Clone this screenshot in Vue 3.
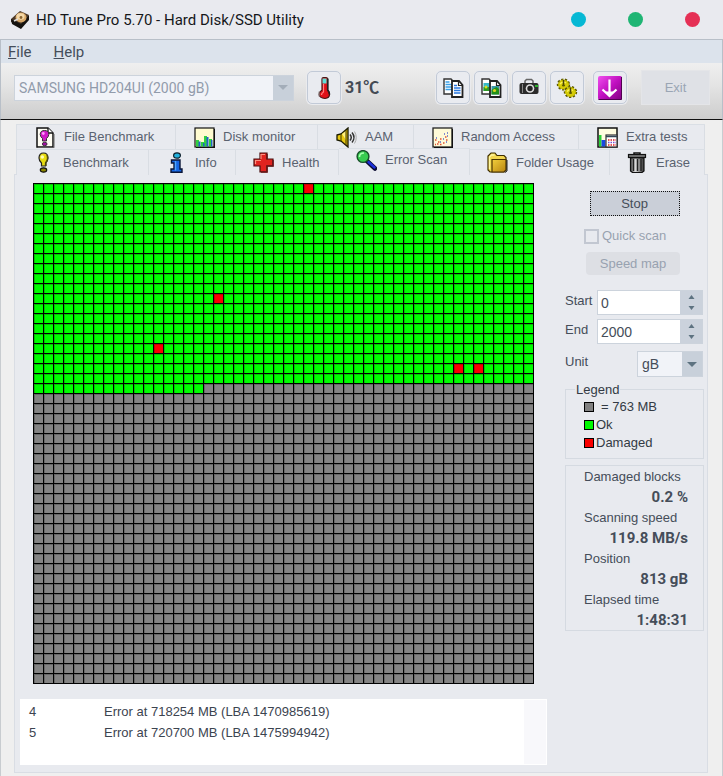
<script setup>
import { ref } from 'vue'

const drive = ref('SAMSUNG HD204UI (2000 gB)')
const start = ref('0')
const end = ref('2000')
const unit = ref('gB')
const quickScan = ref(false)
const active = ref('Error Scan')

const icons = {
  copyText:
    '<path d="M3 3h7l3 3v12H3z" fill="#fff" stroke="#333" stroke-width="1.400"/><path d="M4.500 6h4M4.500 8.500h7M4.500 11h7M4.500 13.500h7" stroke="#3aa0e8" stroke-width="1.300"/><path d="M11 5h7l3.500 4v12H11z" fill="#fff" stroke="#222" stroke-width="1.800"/><path d="M17.500 5v4.500h4" fill="none" stroke="#222" stroke-width="1.200"/><path d="M13 9.500h3M13 12h6.500M13 14.500h6.500M13 17h6.500" stroke="#2878e0" stroke-width="1.500"/>',
  copyImage:
    '<path d="M3 3h7l3 3v12H3z" fill="#fff" stroke="#333" stroke-width="1.400"/><rect x="4.500" y="7" width="6" height="8" fill="#38b8c8"/><path d="M4.500 11h6v4h-6z" fill="#2c9a22"/><circle cx="7" cy="11" r="1.500" fill="#d8e020"/><path d="M11 5h7l3.500 4v12H11z" fill="#fff" stroke="#222" stroke-width="1.800"/><path d="M17.500 5v4.500h4" fill="none" stroke="#222" stroke-width="1.200"/><rect x="12.500" y="10" width="7.500" height="8.500" fill="#3898a8"/><path d="M12.500 14l3-2 2-1 2.500 2v5.500h-7.500z" fill="#239018"/><circle cx="15.500" cy="14.500" r="1.600" fill="#d8d820"/>',
  camera:
    '<path d="M8 7V5l1.500-1.500h5L16 5v2" fill="none" stroke="#666" stroke-width="1.500"/><path d="M4.500 7h15q2 0 2 2v7q0 2-2 2h-15q-2 0-2-2V9q0-2 2-2z" fill="#2b2b2b"/><path d="M5.500 8v9" stroke="#888"/><circle cx="13" cy="12.500" r="4.300" fill="#ddd"/><circle cx="13" cy="12.500" r="2.700" fill="#222"/><rect x="18" y="9" width="3" height="2" fill="#2db52d"/>',
  gears:
    '<g fill="#d6cc08"><ellipse cx="8.500" cy="8.500" rx="5.200" ry="4.600" stroke="#5c5800" stroke-width="3" stroke-dasharray="2 1.400"/><ellipse cx="8.500" cy="8.500" rx="5" ry="4.400" stroke="#c8be00" stroke-width="1"/><ellipse cx="15.500" cy="16" rx="5.200" ry="4.600" stroke="#5c5800" stroke-width="3" stroke-dasharray="2 1.400"/><ellipse cx="15.500" cy="16" rx="5" ry="4.400" stroke="#c8be00" stroke-width="1"/></g><path d="M5 8q2.500-3 6-1M12 15.500q2.500-3 6-1" fill="none" stroke="#fff45c" stroke-width="1.300"/><path d="M8.500 4v5.500M15.500 11.500V17" stroke="#45430c" stroke-width="1.500"/><ellipse cx="8.500" cy="9.500" rx="1.600" ry="1.100" fill="#5c5800"/><ellipse cx="15.500" cy="17" rx="1.600" ry="1.100" fill="#5c5800"/>',
  down:
    '<rect x="0" y="0" width="24" height="24" rx="2" fill="url(#purple)"/><path d="M.5 23.500h23V1" fill="none" stroke="#500050"/><path d="M11.500 3.500v15M4.500 13.500l7 6.500 7-6.500" fill="none" stroke="#fff" stroke-width="2.200"/><path d="M7 15.500h9l-4.500 4.800z" fill="#fff"/>',
  thermo:
    '<path d="M10 3q0-1.500 1.500-1.500H14q1.500 0 1.500 1.500v11q2 2 2 4.500 0 3.500-4.500 4-5.500-.5-6-4 0-2.500 3-4.500z" fill="#e01018" stroke="#4a1414" stroke-width="1.200"/><path d="M10.500 2.500h4v5h-4z" fill="#5ce0d8"/><path d="M15.800 2.500V14q1.700 2 1.700 4.500" fill="none" stroke="#222" stroke-width="1.600"/><path d="M11.500 8v8q-2 1-2 3" fill="none" stroke="#ff8484" stroke-width="1.200"/><path d="M7 15.500v5" stroke="#9a9a9a" stroke-width="1"/>',
  fileBench:
    '<path d="M2 1h11l5 5v14H2z" fill="#fffdf4" stroke="#111" stroke-width="1.500"/><path d="M13 1v5h5" fill="#fff" stroke="#111" stroke-width="1.300"/><path d="M19 7v13.800H3" fill="none" stroke="#666"/><path d="M9.500 3.500q4.300 0 4.300 4 0 2-2.300 4V14h-4v-2.500q-2.300-2-2.300-4 0-4 4.300-4z" fill="#d018c8" stroke="#333"/><circle cx="8.300" cy="6.500" r="1.400" fill="#ff9cfa"/><ellipse cx="9.700" cy="17" rx="2.400" ry="1.700" fill="#a010a0" stroke="#222" stroke-width=".8"/>',
  monitor:
    '<rect x="1" y="1" width="19" height="19" fill="#fffbd0" stroke="#111" stroke-width="1.200"/><path d="M20.500 2v18.500H2" fill="none" stroke="#111" stroke-width="1.200"/><path d="M2 13h3v6.500H2zM7 15h3v4.500H7zM10 9h3v10.500h-3zM15 12h3v7.500h-3z" fill="#30d040"/><path d="M4.500 14.500h2v5h-2zM9 16h1.500v3.500H9zM12.500 10h2v9.500h-2zM17 13h1.500v6.500H17z" fill="#1f62c8"/>',
  speaker:
    '<path d="M1 8l4-1 7-6v19l-7-6-4-1z" fill="#e8c810" stroke="#191900" stroke-width="1.300"/><path d="M6 7l4-3v9z" fill="#fff080"/><path d="M10 3v15M5 7v7" stroke="#3b3200"/><path d="M14 7.500q2.500 3 0 6M16 5.500q4 5 0 10" fill="none" stroke="#333" stroke-width="1.500"/><path d="M18.500 4.500q3.500 6 0 12" fill="none" stroke="#aaa"/>',
  random:
    '<rect x="1" y="1" width="19" height="19" fill="#fffbd8" stroke="#222" stroke-width="1.300"/><path d="M20.500 2v18.500H2" fill="none" stroke="#111" stroke-width="1.200"/><path d="M3 13h1.500M6 15h1.500M8 12h1.500M5 17h1.500M11 16h1.500M14 13h1.500M3 17.500h1M8 17.500h1.500M13 10h1.500" stroke="#e05030" stroke-width="1.500"/><path d="M4 11h1M12 7h1M15 6h1M15 9h1M11 12h1M8 15h1M14 15h1" stroke="#5868c8" stroke-width="1.300"/>',
  extra:
    '<rect x="1" y="1" width="19" height="19" fill="#fffde0" stroke="#111" stroke-width="1.500"/><path d="M2 8h2.500v11.500H2z" fill="#28d038"/><path d="M4.500 13h4v6.500h-4z" fill="#1848e0"/><rect x="9" y="8" width="11" height="12" fill="#fff" stroke="#333" stroke-width="1.200"/><path d="M9 9.500h11" stroke="#345" stroke-width="1.500"/><path d="M11 13h8M11 18h8" stroke="#e02020" stroke-width="1.500" stroke-dasharray="1.500 1"/><path d="M11 15.500h8" stroke="#7850d0" stroke-width="1.500" stroke-dasharray="1.500 1"/>',
  bulb:
    '<path d="M9.500 1q4.500 0 4.500 5 0 3-2.500 5v3h-4v-3Q5 9 5 6q0-5 4.500-5z" fill="#e8dc10" stroke="#222" stroke-width="1.200"/><circle cx="8.300" cy="5" r="1.800" fill="#fffcb0"/><path d="M13 3q1.500 4-1 7.500V14" fill="none" stroke="#55500c" stroke-width="1.400"/><ellipse cx="9.500" cy="18" rx="3.200" ry="2.200" fill="#8c8600" stroke="#111" stroke-width="1.200"/>',
  info:
    '<ellipse cx="11" cy="3.500" rx="3.400" ry="2.700" fill="#22b0dc" stroke="#10202c" stroke-width="1.200"/><path d="M5.500 8h8.500v9h2v3.300H5v-3.300h3v-6H5.500z" fill="#1666e4" stroke="#0b1638" stroke-width="1.400"/><path d="M9.500 9v9.500" stroke="#4ca6ff" stroke-width="1.400"/>',
  health:
    '<path d="M7 1h7v6h6v7h-6v6H7v-6H1V7h6z" fill="#e02420" stroke="#4a1010" stroke-width="1.200"/><path d="M8 7V2.500h4M2.500 12V8.500H8" fill="none" stroke="#ff9080" stroke-width="1.200"/><path d="M14 2v5.500M20 8v6h-6v6H8" fill="none" stroke="#651818" stroke-width="1.500"/>',
  magnifier:
    '<path d="M11 11l8 7.500" stroke="#0a0a30" stroke-width="4.500" stroke-linecap="round"/><path d="M12.500 12l6 5.500" stroke="#1c30d8" stroke-width="2.500" stroke-linecap="round"/><circle cx="7" cy="6.500" r="5.900" fill="#38cc50" stroke="#18502a" stroke-width="1.400"/><path d="M3.500 7q0-4 4.500-4" fill="none" stroke="#a8ffb0" stroke-width="1.600"/>',
  folder:
    '<path d="M1 18V4l3-3h4l2 2.500h7l2 2V18l-2 2H3z" fill="#f3d64e" stroke="#3f2e00" stroke-width="1.200"/><path d="M5 7.500h14V18l-2 2H5z" fill="url(#gold)" stroke="#4a3400" stroke-width="1.200"/><path d="M2.500 17V5l2-2h3" fill="none" stroke="#fff6a0" stroke-width="1.300"/><path d="M20 8v11l-2 1.500" fill="none" stroke="#222"/>',
  trash:
    '<path d="M7 2.500V1h6v1.500" fill="none" stroke="#111" stroke-width="1.500"/><rect x="1.500" y="2.500" width="17" height="3" fill="#777" stroke="#111" stroke-width="1.200"/><path d="M3.500 6H17v13l-2 1.500H5.500l-2-1.500z" fill="url(#steel)" stroke="#111" stroke-width="1.200"/><path d="M6.500 7v12M10.500 7v12M14 7v12" stroke="#222" stroke-width="1.400"/>'
}

const tabRows = [
  [
    { label: 'File Benchmark', icon: 'fileBench' },
    { label: 'Disk monitor', icon: 'monitor' },
    { label: 'AAM', icon: 'speaker' },
    { label: 'Random Access', icon: 'random' },
    { label: 'Extra tests', icon: 'extra' }
  ],
  [
    { label: 'Benchmark', icon: 'bulb' },
    { label: 'Info', icon: 'info' },
    { label: 'Health', icon: 'health' },
    { label: 'Error Scan', icon: 'magnifier' },
    { label: 'Folder Usage', icon: 'folder' },
    { label: 'Erase', icon: 'trash' }
  ]
]

const tools = [
  { label: 'Copy text', icon: 'copyText' },
  { label: 'Copy image', icon: 'copyImage' },
  { label: 'Screenshot', icon: 'camera' },
  { label: 'Options', icon: 'gears' }
]

const damaged = [[27, 0], [18, 11], [12, 16], [42, 18], [44, 18]]

const stats = [
  { name: 'Damaged blocks', value: '0.2 %' },
  { name: 'Scanning speed', value: '119.8 MB/s' },
  { name: 'Position', value: '813 gB' },
  { name: 'Elapsed time', value: '1:48:31' }
]

const log = [
  { n: 4, text: 'Error at 718254 MB (LBA 1470985619)' },
  { n: 5, text: 'Error at 720700 MB (LBA 1475994942)' }
]
</script>

<template>
  <div class="window">
    <svg class="defs" width="0" height="0" aria-hidden="true">
      <defs>
        <linearGradient id="purple" x1="0" y1="0" x2="1" y2="1">
          <stop offset="0" stop-color="#f050ee" /><stop offset=".5" stop-color="#c010c0" /><stop offset="1" stop-color="#800080" />
        </linearGradient>
        <linearGradient id="gold" x1="0" y1="0" x2="1" y2="1">
          <stop offset="0" stop-color="#f2cf3c" /><stop offset="1" stop-color="#b88410" />
        </linearGradient>
        <linearGradient id="steel">
          <stop offset="0" stop-color="#444" /><stop offset=".35" stop-color="#ddd" /><stop offset="1" stop-color="#333" />
        </linearGradient>
      </defs>
    </svg>

    <header class="titlebar">
      <svg class="app-icon" viewBox="0 0 20 20" aria-hidden="true">
        <path d="M1 9L10 1l9 4-8 11-10-4z" fill="#4a3828" />
        <path d="M1 9l10 5v5L2 14zM11 14l8-9v5l-8 9z" fill="#15120f" />
        <ellipse cx="11" cy="7.500" rx="5.500" ry="5" fill="#d8a868" />
        <ellipse cx="10.500" cy="6.500" rx="4" ry="3.200" fill="#f4d8a8" />
        <circle cx="11" cy="7.500" r="1.400" fill="#8a6430" />
        <path d="M4 11l4-2" stroke="#ddd" stroke-width="1.400" />
      </svg>
      <h1>HD Tune Pro 5.70 - Hard Disk/SSD Utility</h1>
      <div class="dots">
        <button class="dot cyan" aria-label="Minimize"></button>
        <button class="dot green" aria-label="Maximize"></button>
        <button class="dot red" aria-label="Close"></button>
      </div>
    </header>

    <nav class="menubar">
      <a href="#file"><u>F</u>ile</a>
      <a href="#help"><u>H</u>elp</a>
    </nav>

    <div class="toolbar">
      <div class="combo drive">
        <select v-model="drive" aria-label="Drive" disabled>
          <option>SAMSUNG HD204UI (2000 gB)</option>
        </select>
        <span class="arrow"><svg viewBox="0 0 10 5"><path d="M0 0h10L5 5z" /></svg></span>
      </div>
      <button class="tool temp" aria-label="Temperature"><svg viewBox="0 0 24 24" v-html="icons.thermo"></svg></button>
      <strong class="degrees">31℃</strong>
      <div class="tools">
        <button v-for="t in tools" :key="t.icon" class="tool" :aria-label="t.label">
          <svg viewBox="0 0 24 24" v-html="icons[t.icon]"></svg>
        </button>
      </div>
      <button class="tool save" aria-label="Save"><svg viewBox="0 0 24 24" v-html="icons.down"></svg></button>
      <button class="exit" disabled>Exit</button>
    </div>

    <main class="body">
      <div class="tabs" role="tablist">
        <div v-for="(row, i) in tabRows" :key="i" class="tab-row" :class="i ? 'second' : 'first'">
          <button
            v-for="tab in row"
            :key="tab.label"
            class="tab"
            :class="{ active: tab.label === active }"
            role="tab"
            :aria-selected="tab.label === active"
            @click="active = tab.label"
          >
            <svg viewBox="0 0 21 21" v-html="icons[tab.icon]"></svg>
            <span>{{ tab.label }}</span>
          </button>
        </div>
      </div>

      <section class="panel">
        <div class="scan">
          <div class="map-wrap">
            <svg class="map" viewBox="0 0 501 501" role="img" aria-label="Block map" shape-rendering="crispEdges">
              <defs>
                <pattern id="mesh" width="10" height="10" patternUnits="userSpaceOnUse">
                  <path d="M0 1.500h10M1.500 0v10" stroke="#000" stroke-opacity=".22" />
                  <path d="M0 .5h10M.5 0v10" stroke="#000" />
                </pattern>
              </defs>
              <rect width="501" height="501" fill="#848484" />
              <path d="M0 0h501v200H170v10H0z" fill="#00ff00" />
              <rect v-for="([c, r]) in damaged" :key="c + '-' + r" :x="c * 10" :y="r * 10" width="10" height="10" fill="#fa0000" />
              <rect width="501" height="501" fill="url(#mesh)" />
            </svg>
          </div>
          <div class="log">
            <table>
              <tbody>
                <tr v-for="l in log" :key="l.n"><td class="num">{{ l.n }}</td><td>{{ l.text }}</td></tr>
              </tbody>
            </table>
            <div class="track"></div>
          </div>
        </div>

        <aside class="side">
          <button class="stop">Stop</button>
          <label class="quick"><input v-model="quickScan" type="checkbox" disabled />Quick scan</label>
          <button class="speed" disabled>Speed map</button>

          <div class="field">
            <label for="start">Start</label>
            <div class="spin">
              <input id="start" v-model="start" type="text" />
              <div class="steps">
                <button aria-label="Increase start"><svg viewBox="0 0 6 4"><path d="M0 4h6L3 0z" /></svg></button>
                <button aria-label="Decrease start"><svg viewBox="0 0 6 4"><path d="M0 0h6L3 4z" /></svg></button>
              </div>
            </div>
          </div>
          <div class="field">
            <label for="end">End</label>
            <div class="spin">
              <input id="end" v-model="end" type="text" />
              <div class="steps">
                <button aria-label="Increase end"><svg viewBox="0 0 6 4"><path d="M0 4h6L3 0z" /></svg></button>
                <button aria-label="Decrease end"><svg viewBox="0 0 6 4"><path d="M0 0h6L3 4z" /></svg></button>
              </div>
            </div>
          </div>
          <div class="field unit">
            <label for="unit">Unit</label>
            <div class="combo">
              <select id="unit" v-model="unit"><option>gB</option><option>MB</option></select>
              <span class="arrow"><svg viewBox="0 0 10 5"><path d="M0 0h10L5 5z" /></svg></span>
            </div>
          </div>

          <fieldset class="legend">
            <legend>Legend</legend>
            <p class="size"><i class="gray"></i>= 763 MB</p>
            <p><i class="ok"></i>Ok</p>
            <p><i class="bad"></i>Damaged</p>
          </fieldset>

          <dl class="stats">
            <template v-for="s in stats" :key="s.name">
              <dt>{{ s.name }}</dt>
              <dd>{{ s.value }}</dd>
            </template>
          </dl>
        </aside>
      </section>
    </main>
  </div>
</template>

<style>
body {
  margin: 0;
  background: #efefef;
}
</style>

<style scoped>
* {
  box-sizing: border-box;
}
.window {
  min-height: 100vh;
  display: flex;
  flex-direction: column;
  font: 14px/18px Roboto, "Liberation Sans", "Noto Sans CJK SC", sans-serif;
  color: #3c4450;
  background: #efefef;
}
.defs {
  position: absolute;
}
button,
input,
select {
  font: inherit;
  color: inherit;
  margin: 0;
  padding: 0;
  border: 0;
  border-radius: 0;
}
.titlebar {
  height: 39px;
  display: flex;
  align-items: center;
  padding: 0 23px 0 10px;
  background: #e9eaef;
}
.app-icon {
  width: 20px;
  height: 20px;
}
h1 {
  margin: 0 0 0 6px;
  font: 400 15px/20px Roboto, sans-serif;
  color: #15171a;
}
.dots {
  margin-left: auto;
  display: flex;
  gap: 42px;
}
.dot {
  width: 15px;
  height: 15px;
  border-radius: 50%;
}
.cyan { background: #06b8d4; }
.green { background: #1fb574; }
.red { background: #e53055; }
.menubar {
  height: 24px;
  display: flex;
  align-items: center;
  gap: 22px;
  padding: 0 7px;
  border: solid #b8bfc8;
  border-width: 1px 1px 0;
  background: #dce3ec;
  font-size: 15px;
}
.menubar a {
  color: #454e5a;
  text-decoration: none;
}
.toolbar {
  height: 57px;
  display: flex;
  align-items: center;
  padding: 0 13px 7px;
  border: solid #b8bfc8;
  border-width: 0 1px;
  border-bottom: 1px solid #111;
  background: linear-gradient(#efefef, #e4e4e4 40%, #cdcdcd);
}
.combo {
  display: flex;
  position: relative;
  border: 1px solid #ccd3dc;
}
.combo select {
  appearance: none;
  width: 100%;
  padding-left: 4px;
  background: #f1f3f8;
}
.combo .arrow {
  position: absolute;
  inset: 0 0 0 auto;
  width: 20px;
  display: grid;
  place-items: center;
  background: #c8d0da;
  pointer-events: none;
}
.arrow svg {
  width: 10px;
  height: 5px;
  fill: #5d7280;
}
.drive {
  width: 280px;
  flex-shrink: 1;
  height: 26px;
}
.drive select {
  color: #919bab;
  opacity: 1;
}
.drive .arrow svg {
  fill: #a3adb9;
}
.tool {
  width: 34px;
  height: 33px;
  flex: none;
  display: grid;
  place-items: center;
  border: 1px solid #c2cad7;
  border-radius: 5px;
  background: #e9ebf0;
  box-shadow: 0 0 0 1px #eaebee;
}
.tool svg {
  width: 24px;
  height: 24px;
}
.temp {
  margin-left: 13px;
}
.degrees {
  margin-left: 4px;
  font-size: 16px;
  color: #454b54;
}
.tools {
  display: flex;
  gap: 4px;
  margin-left: auto;
}
.save {
  margin-left: 9px;
}
.exit {
  width: 67px;
  height: 33px;
  margin-left: 15px;
  font-family: "Liberation Sans", sans-serif;
  font-size: 13px;
  color: #9aa5b4;
  background: #dfe1e6;
  box-shadow: 0 0 0 1px #e4e5e8;
}
.body {
  flex: 1;
  padding: 4px 14px 2px 13px;
  border: solid #c8ccd0;
  border-width: 0 1px;
  background: #efefef;
  font-family: "Liberation Sans", sans-serif;
  font-size: 13px;
}
.tabs {
  margin: 0 3px 0 2px;
}
.tab-row {
  display: grid;
  height: 25px;
  border: solid #dadfe5;
  border-width: 1px 0 0 1px;
}
.first {
  grid-template-columns: 159fr 142fr 96fr 165fr 126fr;
}
.second {
  grid-template-columns: 132fr 87fr 103fr 131fr 140fr 95fr;
}
.tab {
  display: flex;
  align-items: center;
  gap: 8px;
  min-width: 0;
  padding-left: 18px;
  border-right: 1px solid #d9dde3;
  background: #e8eaef;
  color: #5a6270;
  white-space: nowrap;
}
.second .tab {
  padding-left: 17px;
}
.tab svg {
  width: 21px;
  height: 21px;
  flex: none;
}
.tab.active {
  height: 27px;
  margin-top: -2px;
  padding-bottom: 4px;
  border-top: 1px solid #dadfe5;
  position: relative;
}
.panel {
  display: grid;
  grid-template-columns: minmax(0, 1fr) 139px;
  gap: 18px;
  padding: 8px 3px 7px 5px;
  border: 1px solid #d9dde4;
  background: #e8eaef;
}
.map-wrap {
  padding: 0 13px;
}
.map {
  display: block;
  width: 100%;
}
.log {
  display: flex;
  justify-content: space-between;
  margin-top: 15px;
  min-height: 66px;
  background: #fff;
}
.log table {
  border-collapse: collapse;
  margin: 2px 0 0 9px;
  height: 42px;
}
.log td {
  height: 21px;
  padding: 0;
}
.log .num {
  width: 75px;
}
.track {
  width: 22px;
  margin: 1px;
  background: #f8f8fb;
}
.side {
  display: flex;
  flex-direction: column;
  color: #454d59;
}
.stop {
  align-self: center;
  width: 90px;
  height: 25px;
  margin-top: 8px;
  border: 1px dotted #111;
  background: #cacfd8;
}
.quick {
  display: flex;
  align-items: center;
  gap: 3px;
  margin: 11px 0 0 19px;
  color: #98a2b0;
}
.quick input {
  appearance: none;
  width: 15px;
  height: 15px;
  border: 2px solid #c2c7d1;
  background: #e8eaef;
}
.speed {
  width: 94px;
  height: 23px;
  margin: 7px 0 15px 21px;
  border-radius: 4px;
  color: #98a2b0;
  background: #dddfe4;
}
.field {
  display: flex;
  justify-content: space-between;
  align-items: flex-start;
  padding-right: 1px;
  margin-bottom: 4px;
}
.field label {
  line-height: 22px;
}
.spin {
  display: flex;
  width: 106px;
  height: 25px;
  border: 1px solid #ccd3dc;
}
.spin input {
  flex: 1;
  min-width: 0;
  padding-left: 3px;
  background: #fff;
  font-size: 14px;
}
.steps {
  width: 22px;
  display: flex;
  flex-direction: column;
  background: #cbd2dc;
}
.steps button {
  flex: 1;
  display: grid;
  place-items: center;
  background: none;
}
.steps svg {
  width: 7px;
  height: 4px;
  fill: #5d7280;
}
.unit {
  margin-top: 3px;
}
.unit .combo {
  width: 66px;
  height: 26px;
}
.unit select {
  font-size: 14px;
}
.legend {
  min-width: 0;
  height: 78px;
  margin: 0;
  padding: 0 0 0 18px;
  border: 1px solid #d5dae1;
  color: #333a44;
}
.legend legend {
  margin-left: -9px;
  padding: 0 1px;
  line-height: 17px;
}
.legend p {
  display: flex;
  align-items: center;
  gap: 2px;
  margin: 0;
}
.legend .size {
  gap: 7px;
}
.legend i {
  width: 10px;
  height: 10px;
  border: 1px solid #000;
}
.gray { background: #808080; }
.ok { background: #00fa00; }
.bad { background: #fa0000; }
.stats {
  margin: 6px 0 0;
  padding: 0 15px 0 18px;
  border: 1px solid #d5dae1;
}
.stats dt {
  line-height: 21px;
}
.stats dd {
  margin: 0;
  font: 700 15px/20px Roboto, sans-serif;
  text-align: right;
}
</style>
